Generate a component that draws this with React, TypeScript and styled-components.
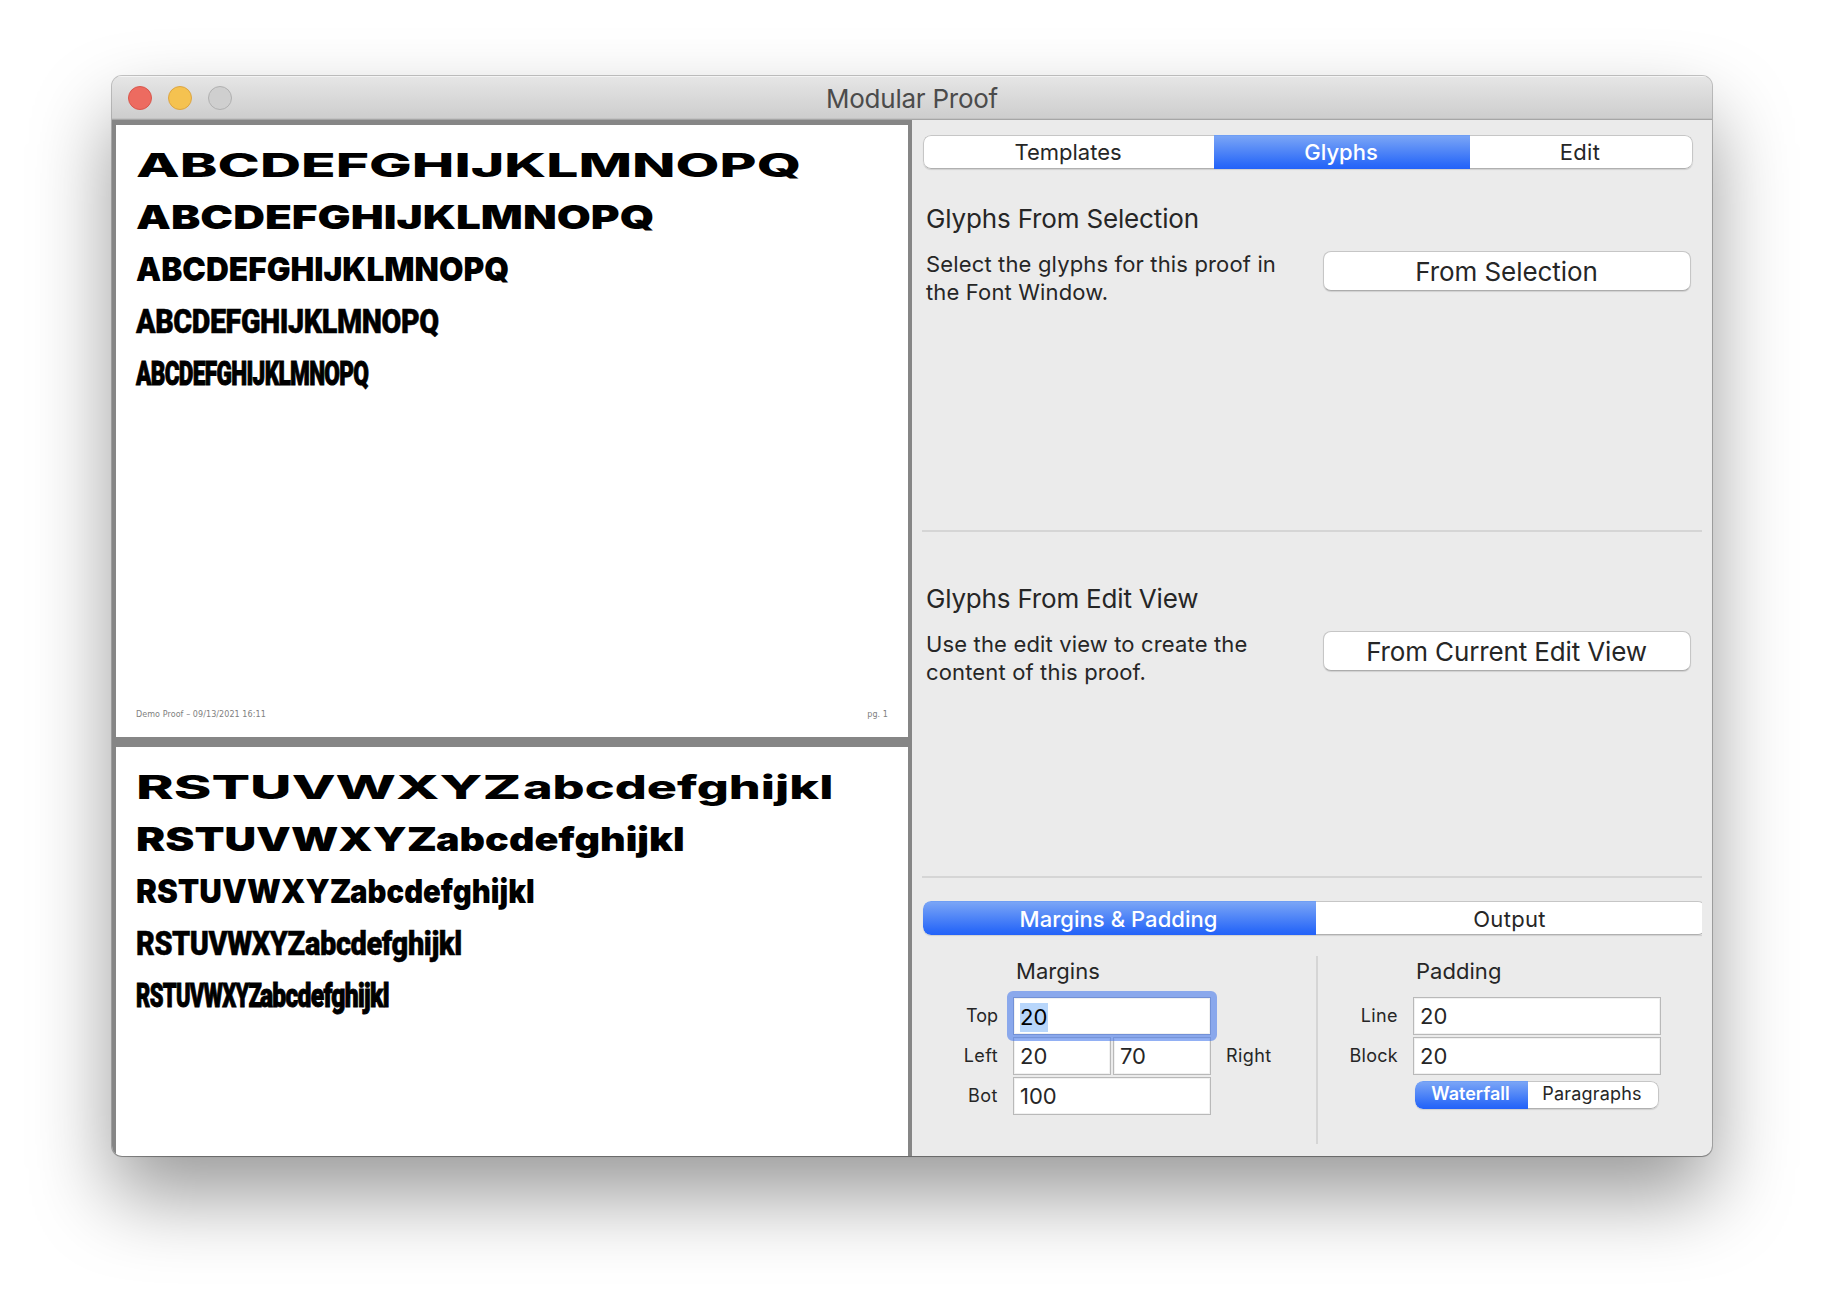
import React from 'react';
import styled, { createGlobalStyle, css } from 'styled-components';

const GlobalStyle = createGlobalStyle`
  * { box-sizing: border-box; }
  body {
    margin: 0;
    background: #fff;
    color: #262626;
    font-family: Inter, "Liberation Sans", sans-serif;
  }
`;

const Desktop = styled.div`
  width: 1824px;
  height: 1304px;
  padding: 76px 112px 0;
  overflow: hidden;
`;

const Window = styled.section`
  width: 1600px;
  height: 1080px;
  display: flex;
  flex-direction: column;
  overflow: hidden;
  border-radius: 10px;
  background: #ebebeb;
  box-shadow: 0 0 0 1px rgba(0, 0, 0, 0.22), 0 1px 1px rgba(0, 0, 0, 0.2),
    0 40px 80px rgba(0, 0, 0, 0.4);
`;

const TitleBar = styled.header`
  flex: none;
  height: 44px;
  display: grid;
  grid-template-columns: 1fr auto 1fr;
  align-items: center;
  padding: 0 16px;
  background: linear-gradient(#e6e6e6, #cdcdcd);
  border-bottom: 1px solid #a6a6a6;
  box-shadow: inset 0 1px 0 #f4f4f4, inset 0 -1px 0 #c2c2c2;
`;

const Lights = styled.div`
  display: flex;
  gap: 16px;
`;

const Light = styled.span<{ $fill: string; $edge: string }>`
  width: 24px;
  height: 24px;
  border-radius: 50%;
  background: ${(p) => p.$fill};
  border: 1px solid ${(p) => p.$edge};
`;

const Title = styled.h1`
  margin: 0;
  padding-top: 3px;
  font-size: 26px;
  font-weight: 400;
  line-height: 28px;
  letter-spacing: -0.25px;
  color: #4b4b4b;
`;

const Body = styled.div`
  flex: 1;
  min-height: 0;
  display: grid;
  grid-template-columns: 800px 800px;
`;

const Preview = styled.div`
  min-height: 0;
  display: flex;
  flex-direction: column;
  gap: 10px;
  padding: 5px 4px 0;
  overflow: hidden;
  background: #868686;
`;

const Page = styled.article`
  flex: none;
  height: 612px;
  display: flex;
  flex-direction: column;
  padding: 14px 20px 14px;
  background: #fff;
  color: #000;
`;

const Line = styled.div`
  display: flex;
  height: 52px;
  line-height: 52px;
  white-space: nowrap;
`;

const faces = {
  wide: css`
    font-family: Inter, sans-serif;
    font-size: 33px;
    font-weight: 800;
  `,
  regular: css`
    font-family: Inter, sans-serif;
    font-size: 33px;
    font-weight: 900;
  `,
  narrow: css`
    padding-top: 1px;
    font-family: Roboto, sans-serif;
    font-size: 33.75px;
    font-weight: 900;
    letter-spacing: -0.5px;
    -webkit-text-stroke: 0.5px #000;
  `,
  tight: css`
    padding-top: 1px;
    font-family: Roboto, sans-serif;
    font-size: 33.75px;
    font-weight: 900;
    letter-spacing: -1px;
    -webkit-text-stroke: 1px #000;
  `,
};

const Run = styled.span<{ $face: keyof typeof faces; $stretch: number; $advance: number }>`
  flex: none;
  width: ${(p) => p.$advance}px;
  transform: scaleX(${(p) => p.$stretch});
  transform-origin: left center;
  ${(p) => faces[p.$face]}
`;

const PageFooter = styled.footer`
  display: flex;
  justify-content: space-between;
  margin-top: auto;
  font: 8px/16px "DejaVu Sans", sans-serif;
  letter-spacing: 0.08px;
  color: #808080;
`;

const Panel = styled.div`
  display: flex;
  flex-direction: column;
  padding: 15px 10px 0;
`;

const Segmented = styled.div<{ $width: number; $small?: boolean; $cut?: boolean }>`
  display: flex;
  width: ${(p) => p.$width}px;
  height: ${(p) => (p.$small ? 28 : 34)}px;
  margin-left: ${(p) => (p.$small ? 0 : 1)}px;
  overflow: hidden;
  border-radius: ${(p) => (p.$cut ? '8px 0 0 8px' : '8px')};
  font-size: ${(p) => (p.$small ? 18 : 22)}px;
  box-shadow: 0 1px 1px rgba(0, 0, 0, 0.12);
`;

const Segment = styled.button<{
  $width: number;
  $on?: boolean;
  $track?: number;
  $lift?: number;
  $drop?: number;
}>`
  flex: none;
  width: ${(p) => p.$width}px;
  padding: ${(p) => p.$drop ?? 0}px 2px ${(p) => p.$lift ?? 0}px 0;
  border: solid #c6c6c6;
  border-width: 1px 0;
  border-bottom-color: #b0b0b0;
  background: #fff;
  color: #262626;
  font: inherit;
  letter-spacing: ${(p) => p.$track ?? 0}px;
  &:first-child {
    border-left-width: 1px;
    border-radius: 8px 0 0 8px;
  }
  &:last-child {
    border-right-width: 1px;
    border-radius: 0 8px 8px 0;
  }
  ${(p) =>
    p.$on &&
    css`
      border-width: 0 !important;
      background: linear-gradient(#6397f3 0, #7aa5f6 1px, #2d6bf8 85%, #2362f9);
      color: #fff;
      font-weight: ${p.$lift ? 600 : 500};
    `}
`;

const Source = styled.section<{ $height: number; $top: number }>`
  flex: none;
  height: ${(p) => p.$height}px;
  padding: ${(p) => p.$top}px 11px 0 4px;
  border-bottom: 2px solid #d5d5d5;
`;

const SourceTitle = styled.h2<{ $track: number }>`
  margin: 0 0 16px;
  font-size: 26px;
  font-weight: 400;
  line-height: 30px;
  letter-spacing: ${(p) => p.$track}px;
`;

const SourceRow = styled.div`
  display: flex;
  justify-content: space-between;
  align-items: flex-start;
`;

const Hint = styled.p`
  margin: 0;
  font-size: 22px;
  line-height: 28px;
  letter-spacing: 0.15px;
`;

const PushButton = styled.button<{ $track?: number }>`
  width: 368px;
  height: 40px;
  margin-top: 1px;
  padding: 2px 1px 0 0;
  border: 1px solid #c6c6c6;
  border-bottom-color: #acacac;
  border-radius: 8px;
  background: #fff;
  box-shadow: 0 1px 1px rgba(0, 0, 0, 0.12);
  color: #262626;
  font: 26px/36px Inter, sans-serif;
  letter-spacing: ${(p) => p.$track ?? 0}px;
`;

const TabRow = styled.div`
  margin-top: 23px;
  overflow-x: clip;
`;

const Settings = styled.div`
  display: grid;
  grid-template-columns: 396px 384px;
  height: 188px;
  margin-top: 21px;
`;

const Group = styled.div<{ $label: number }>`
  display: grid;
  grid-template-columns: ${(p) => p.$label}px auto 1fr;
  grid-template-rows: 39px 38px 38px 38px;
  column-gap: 16px;
  row-gap: 2px;
  align-content: start;
  border-right: ${(p) => (p.$label === 75 ? '2px solid #d5d5d5' : '0')};
`;

const GroupTitle = styled.h3`
  grid-column: 2 / 4;
  margin: 0 0 0 3px;
  padding-top: 1px;
  font-size: 22px;
  font-weight: 400;
  line-height: 28px;
  letter-spacing: 0.04px;
`;

const FieldLabel = styled.label<{ $track?: number; $after?: boolean }>`
  grid-column: ${(p) => (p.$after ? 3 : 1)};
  align-self: center;
  text-align: ${(p) => (p.$after ? 'left' : 'right')};
  margin-left: ${(p) => (p.$after ? -1 : 0)}px;
  margin-right: ${(p) => (p.$after ? 0 : -1)}px;
  font-size: 18px;
  line-height: 22px;
  letter-spacing: ${(p) => p.$track ?? 0}px;
`;

const Fields = styled.div`
  display: flex;
  gap: 2px;
`;

const Field = styled.div<{ $width: number; $focus?: boolean }>`
  width: ${(p) => p.$width}px;
  height: 38px;
  padding: 4px 0 0 6px;
  border: 1px solid #b9b9b9;
  background: #fff;
  box-shadow: inset 0 0 0 1px #f1f1f1;
  font-size: 22px;
  line-height: 29px;
  ${(p) =>
    p.$focus &&
    css`
      position: relative;
      z-index: 1;
      padding-top: 5px;
      border-color: #7391d6;
      color: #000;
      &::after {
        content: '';
        position: absolute;
        inset: -7px;
        border: 6px solid rgba(74, 124, 236, 0.6);
        border-radius: 6px;
      }
    `}
`;

const Selected = styled.span`
  display: inline-block;
  width: 28px;
  height: 29px;
  background: #b8d6fb;
`;

const SmallTabs = styled.div`
  grid-column: 2 / 4;
  width: 244px;
  margin: 4px 0 0 2px;
`;

type RunSpec = [text: string, stretch: number, advance: number];
type LineSpec = { face: keyof typeof faces; runs: RunSpec[] };

const UPPER_A = 'ABCDEFGHIJKLMNOPQ';
const UPPER_B = 'RSTUVWXYZ';
const LOWER = 'abcdefghijkl';

const firstPage: LineSpec[] = [
  { face: 'wide', runs: [[UPPER_A, 1.724, 668]] },
  { face: 'regular', runs: [[UPPER_A, 1.332, 520]] },
  { face: 'regular', runs: [[UPPER_A, 0.959, 374]] },
  { face: 'narrow', runs: [[UPPER_A, 0.852, 303]] },
  { face: 'tight', runs: [[UPPER_A, 0.67, 233]] },
];

const secondPage: LineSpec[] = [
  { face: 'wide', runs: [[UPPER_B, 1.73, 387], [LOWER, 1.525, 311]] },
  { face: 'regular', runs: [[UPPER_B, 1.327, 300], [LOWER, 1.197, 250]] },
  { face: 'regular', runs: [[UPPER_B, 0.95, 214], [LOWER, 0.889, 186]] },
  { face: 'narrow', runs: [[UPPER_B, 0.855, 168.5], [LOWER, 0.86, 158]] },
  { face: 'tight', runs: [[UPPER_B, 0.65, 124], [LOWER, 0.73, 130]] },
];

function ProofPage({ lines, page }: { lines: LineSpec[]; page: number }) {
  return (
    <Page>
      {lines.map((line, i) => (
        <Line key={i}>
          {line.runs.map(([text, stretch, advance]) => (
            <Run key={text} $face={line.face} $stretch={stretch} $advance={advance}>
              {text}
            </Run>
          ))}
        </Line>
      ))}
      {page === 1 && (
        <PageFooter>
          <span>Demo Proof – 09/13/2021 16:11</span>
          <span>pg. 1</span>
        </PageFooter>
      )}
    </Page>
  );
}

export default function App() {
  return (
    <>
      <GlobalStyle />
      <Desktop>
        <Window>
          <TitleBar>
            <Lights>
              <Light $fill="#ed6b60" $edge="#d8574d" />
              <Light $fill="#f5c250" $edge="#dca543" />
              <Light $fill="#cfcfcf" $edge="#b0b0b0" />
            </Lights>
            <Title>Modular Proof</Title>
          </TitleBar>
          <Body>
            <Preview>
              <ProofPage lines={firstPage} page={1} />
              <ProofPage lines={secondPage} page={2} />
            </Preview>
            <Panel>
              <Segmented $width={770}>
                <Segment $width={291}>Templates</Segment>
                <Segment $width={256} $on>Glyphs</Segment>
                <Segment $width={223} $track={0.3}>Edit</Segment>
              </Segmented>
              <Source $height={363} $top={35}>
                <SourceTitle $track={-0.16}>Glyphs From Selection</SourceTitle>
                <SourceRow>
                  <Hint>
                    Select the glyphs for this proof in
                    <br />
                    the Font Window.
                  </Hint>
                  <PushButton $track={-0.08}>From Selection</PushButton>
                </SourceRow>
              </Source>
              <Source $height={346} $top={52}>
                <SourceTitle $track={-0.19}>Glyphs From Edit View</SourceTitle>
                <SourceRow>
                  <Hint>
                    Use the edit view to create the
                    <br />
                    content of this proof.
                  </Hint>
                  <PushButton $track={-0.14}>From Current Edit View</PushButton>
                </SourceRow>
              </Source>
              <TabRow>
                <Segmented $width={783} $cut>
                  <Segment $width={393} $on $track={0.05} $drop={1}>Margins &amp; Padding</Segment>
                  <Segment $width={390} $track={0.3} $drop={1}>Output</Segment>
                </Segmented>
              </TabRow>
              <Settings>
                <Group $label={75}>
                  <GroupTitle>Margins</GroupTitle>
                  <FieldLabel>Top</FieldLabel>
                  <Fields>
                    <Field $width={198} $focus><Selected>20</Selected></Field>
                  </Fields>
                  <span />
                  <FieldLabel $track={0.4}>Left</FieldLabel>
                  <Fields>
                    <Field $width={98}>20</Field>
                    <Field $width={98}>70</Field>
                  </Fields>
                  <FieldLabel $track={0.4} $after>Right</FieldLabel>
                  <FieldLabel $track={0.5}>Bot</FieldLabel>
                  <Fields>
                    <Field $width={198}>100</Field>
                  </Fields>
                </Group>
                <Group $label={79}>
                  <GroupTitle>Padding</GroupTitle>
                  <FieldLabel $track={0.4}>Line</FieldLabel>
                  <Fields>
                    <Field $width={248}>20</Field>
                  </Fields>
                  <span />
                  <FieldLabel $track={0.3}>Block</FieldLabel>
                  <Fields>
                    <Field $width={248}>20</Field>
                  </Fields>
                  <span />
                  <SmallTabs>
                    <Segmented $width={244} $small>
                      <Segment $width={113} $on $lift={3}>Waterfall</Segment>
                      <Segment $width={131} $lift={3} $track={0.2}>Paragraphs</Segment>
                    </Segmented>
                  </SmallTabs>
                </Group>
              </Settings>
            </Panel>
          </Body>
        </Window>
      </Desktop>
    </>
  );
}
